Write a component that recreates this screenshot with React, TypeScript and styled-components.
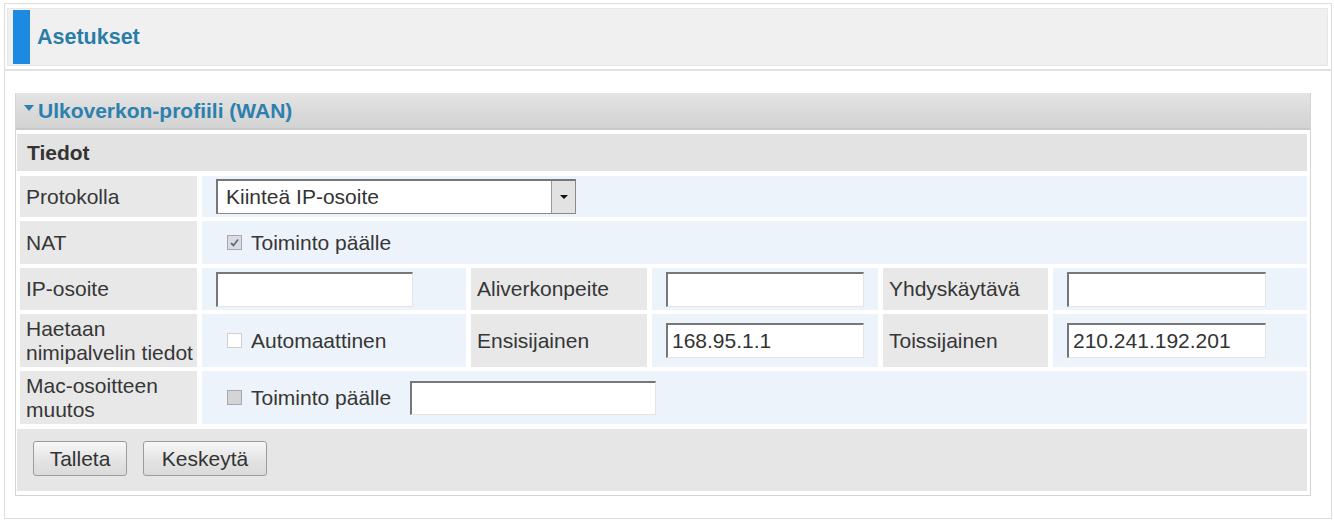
import React from 'react';
import styled, { createGlobalStyle } from 'styled-components';

const GlobalStyle = createGlobalStyle`
  html, body {
    margin: 0;
    padding: 0;
    background: #fff;
  }
  body {
    font-family: "Liberation Sans", Arial, sans-serif;
    font-size: 21px;
    color: #363636;
  }
`;

const Frame = styled.div`
  box-sizing: border-box;
  margin: 3px 2px 0 4px;
  height: 516px;
  border: 1px solid #dcdcdc;
`;

const TopSection = styled.div`
  padding: 4px 3px 3px 2px;
  border-bottom: 2px solid #e1e1e1;
`;

const TopBar = styled.div`
  box-sizing: border-box;
  display: flex;
  align-items: center;
  height: 58px;
  background: #f0f0f0;
  border: 1px solid #e6e6e6;
`;

const BlueBar = styled.span`
  align-self: stretch;
  width: 17px;
  margin: 1px 7px 1px 5px;
  background: #1b8ae0;
`;

const PageTitle = styled.h1`
  margin: 0;
  font-size: 21.5px;
  font-weight: bold;
  color: #2a7da6;
`;

const Panel = styled.section`
  box-sizing: border-box;
  width: 1296px;
  margin: 22px 0 0 10px;
  border: 1px solid #d4d4d4;
  border-top: none;
`;

const PanelHeader = styled.div`
  box-sizing: border-box;
  display: flex;
  align-items: center;
  height: 37px;
  padding-left: 8px;
  background: linear-gradient(#e4e4e4, #d9d9d9 60%, #d3d3d3);
  border-bottom: 2px solid #c9c9c9;
  font-weight: bold;
  color: #2c80ad;
`;

const Caret = styled.span`
  width: 0;
  height: 0;
  margin-right: 4px;
  margin-top: -6px;
  border-left: 5px solid transparent;
  border-right: 5px solid transparent;
  border-top: 6px solid #2c80ad;
`;

const PanelBody = styled.div`
  padding: 4px 3px 4px 1px;
`;

const SectionRow = styled.div`
  display: flex;
  align-items: center;
  height: 37px;
  padding-left: 10px;
  margin-bottom: 5px;
  background: #e3e3e3;
  font-weight: bold;
  color: #333;
`;

const FormGrid = styled.div`
  display: grid;
  margin-left: 3px;
  grid-template-columns: 177px 264px 176px 226px 165px 1fr;
  grid-template-rows: 41px 43px 42px 53px 53px;
  gap: 4px 5px;
`;

const Label = styled.div`
  display: flex;
  align-items: center;
  padding-left: 6px;
  background: #e8e8e8;
  line-height: 24px;
`;

const Value = styled.div<{ $span?: number }>`
  display: flex;
  align-items: center;
  gap: 9px;
  padding-left: 14px;
  background: #edf3fa;
  grid-column: span ${(p) => p.$span ?? 1};
`;

const Input = styled.div<{ $w: number; $h?: number }>`
  box-sizing: border-box;
  display: flex;
  align-items: center;
  width: ${(p) => p.$w}px;
  height: ${(p) => p.$h ?? 35}px;
  padding-left: 4px;
  background: #fff;
  border-top: 2px solid #777;
  border-left: 2px solid #777;
  border-right: 1px solid #e4e4e4;
  border-bottom: 1px solid #e4e4e4;
  color: #333;
`;

const Select = styled.div`
  box-sizing: border-box;
  display: flex;
  width: 360px;
  height: 35px;
  background: #fff;
  border: 1px solid #8a8a8a;
  border-top: 2px solid #777;
  border-left: 2px solid #777;
`;

const SelectText = styled.span`
  flex: 1;
  display: flex;
  align-items: center;
  padding-left: 8px;
  color: #333;
`;

const SelectArrow = styled.span`
  display: flex;
  align-items: center;
  justify-content: center;
  width: 23px;
  background: #e2e2e2;
  border-left: 1px solid #9a9a9a;

  &::after {
    content: '';
    border-left: 4px solid transparent;
    border-right: 4px solid transparent;
    border-top: 4px solid #111;
  }
`;

const Check = styled.span<{ $state: 'on' | 'off' | 'disabled' }>`
  box-sizing: border-box;
  display: flex;
  align-items: center;
  justify-content: center;
  flex: none;
  width: 15px;
  height: 15px;
  margin-left: 11px;
  border: 1px solid ${(p) => (p.$state === 'off' ? '#cfcfcf' : '#a9a9a9')};
  background: ${(p) =>
    p.$state === 'on' ? '#d9dde3' : p.$state === 'disabled' ? '#d4d4d4' : '#fff'};
`;

const Spacer = styled.span`
  width: 1px;
`;

const ButtonRow = styled.div`
  display: flex;
  align-items: center;
  gap: 16px;
  height: 62px;
  margin-top: 5px;
  padding-left: 16px;
  background: #e6e6e6;
`;

const Button = styled.button<{ $w: number }>`
  box-sizing: border-box;
  width: ${(p) => p.$w}px;
  height: 35px;
  margin-top: -3px;
  padding: 0;
  font-family: inherit;
  font-size: 21px;
  color: #333;
  background: linear-gradient(#f7f7f7, #e4e4e4 55%, #dadada);
  border: 1px solid #9c9c9c;
  border-radius: 3px;
`;

const CheckBox = ({ state }: { state: 'on' | 'off' | 'disabled' }) => (
  <Check $state={state}>
    {state === 'on' && (
      <svg width="11" height="11" viewBox="0 0 11 11">
        <path d="M2 6 L4.5 8.5 L9 2.5" fill="none" stroke="#5d6c82" strokeWidth="1.8" />
      </svg>
    )}
  </Check>
);

export default function App() {
  return (
    <>
      <GlobalStyle />
      <Frame>
        <TopSection>
          <TopBar>
            <BlueBar />
            <PageTitle>Asetukset</PageTitle>
          </TopBar>
        </TopSection>

        <Panel>
          <PanelHeader>
            <Caret />
            Ulkoverkon-profiili (WAN)
          </PanelHeader>
          <PanelBody>
            <SectionRow>Tiedot</SectionRow>
            <FormGrid>
              <Label>Protokolla</Label>
              <Value $span={5}>
                <Select>
                  <SelectText>Kiinteä IP-osoite</SelectText>
                  <SelectArrow />
                </Select>
              </Value>

              <Label>NAT</Label>
              <Value $span={5}>
                <CheckBox state="on" />
                <span>Toiminto päälle</span>
              </Value>

              <Label>IP-osoite</Label>
              <Value>
                <Input $w={197} />
              </Value>
              <Label>Aliverkonpeite</Label>
              <Value>
                <Input $w={198} />
              </Value>
              <Label>Yhdyskäytävä</Label>
              <Value>
                <Input $w={199} />
              </Value>

              <Label>
                Haetaan
                <br />
                nimipalvelin tiedot
              </Label>
              <Value>
                <CheckBox state="off" />
                <span>Automaattinen</span>
              </Value>
              <Label>Ensisijainen</Label>
              <Value>
                <Input $w={198}>168.95.1.1</Input>
              </Value>
              <Label>Toissijainen</Label>
              <Value>
                <Input $w={199}>210.241.192.201</Input>
              </Value>

              <Label>
                Mac-osoitteen
                <br />
                muutos
              </Label>
              <Value $span={5}>
                <CheckBox state="disabled" />
                <span>Toiminto päälle</span>
                <Spacer />
                <Input $w={246} $h={34} />
              </Value>
            </FormGrid>

            <ButtonRow>
              <Button $w={94}>Talleta</Button>
              <Button $w={124}>Keskeytä</Button>
            </ButtonRow>
          </PanelBody>
        </Panel>
      </Frame>
    </>
  );
}
